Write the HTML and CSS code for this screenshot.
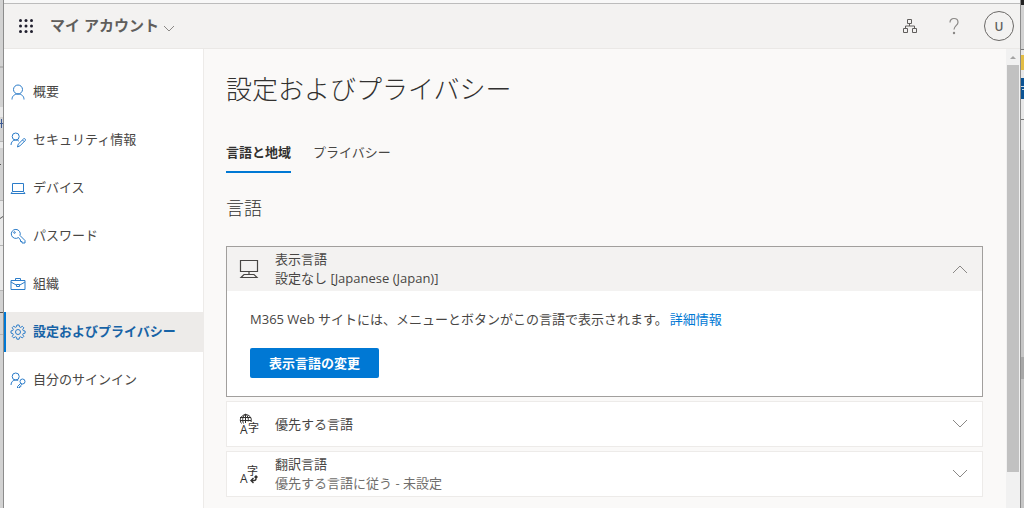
FILE: index.html
```html
<!DOCTYPE html>
<html lang="ja">
<head>
<meta charset="utf-8">
<meta name="viewport" content="width=device-width, initial-scale=1">
<title>マイ アカウント</title>
<link rel="stylesheet" href="styles.css">
</head>
<body>
<div class="desktop">
  <svg class="edge edge-left" viewBox="0 0 4 508" preserveAspectRatio="xMinYMin slice" aria-hidden="true">
    <path fill="#b5b5b5" d="M0 66h3v2H0zM0 141h3v1H0zM0 200h3v1H0zM0 245h3v1H0zM0 290h3v1H0zM0 334h3v1H0z"/>
    <path fill="#e9e9e9" d="M0 107h3v10H0zM0 142h3v6H0zM0 201h3v44H0zM0 246h3v44H0z"/>
    <path fill="#3b5a94" d="M0 123h3v1H0zM1 119h1v9H1z"/>
    <path fill="#555" d="M0 164h1v1H0zM0 218l3-2v1l-3 2zM0 312h3v1H0z"/>
    <path fill="#8c8c8c" d="M3 0h1v508H3z"/>
  </svg>
  <div class="window">
    <header class="topbar">
      <button class="icon-button waffle" type="button" aria-label="アプリ起動ツール">
        <svg width="16" height="16" viewBox="0 0 16 16" fill="#201f2e"><circle cx="2.500" cy="2.500" r="1.500"/><circle cx="8" cy="2.500" r="1.500"/><circle cx="13.500" cy="2.500" r="1.500"/><circle cx="2.500" cy="8" r="1.500"/><circle cx="8" cy="8" r="1.500"/><circle cx="13.500" cy="8" r="1.500"/><circle cx="2.500" cy="13.500" r="1.500"/><circle cx="8" cy="13.500" r="1.500"/><circle cx="13.500" cy="13.500" r="1.500"/></svg>
      </button>
      <button class="app-name" type="button">マイ アカウント
        <svg width="12" height="8" viewBox="0 0 12 8" fill="none" stroke="#8a8886"><path d="M1 1l5 5 5-5"/></svg>
      </button>
      <div class="tools">
        <button class="icon-button" type="button" aria-label="組織の切り替え">
          <svg width="16" height="16" viewBox="0 0 16 16" fill="none" stroke="#605e5c"><path d="M5.500 1.500h4v4h-4zM1.500 10.500h4v4h-4zM10.500 10.500h4v4h-4zM7.500 5.500v2.500M3.500 10.500V8h9v2.500"/></svg>
        </button>
        <button class="icon-button" type="button" aria-label="ヘルプ">
          <svg width="12" height="18" viewBox="0 0 12 18" fill="none" stroke="#8a8886" stroke-width="1.200"><path d="M2 5.500C2 3 3.700 1.500 6 1.500s4 1.400 4 3.700c0 3.200-4 3.800-4 7.300"/><circle cx="6" cy="16" r=".6" fill="#8a8886"/></svg>
        </button>
        <button class="avatar" type="button" aria-label="アカウント">U</button>
      </div>
    </header>
    <div class="body">
      <nav class="sidebar">
        <a class="nav-item" href="#overview"><svg class="nav-icon" viewBox="0 0 16 16"><circle cx="8" cy="5.500" r="4.500"/><path d="M2 15.500c0-3.500 2.500-5.500 6-5.500s6 2 6 5.500"/></svg>概要</a>
        <a class="nav-item" href="#security"><svg class="nav-icon" viewBox="0 0 16 16"><circle cx="5.700" cy="4.500" r="3.500"/><path d="M1 13c0-3 2-5 4.700-5 1.300 0 2.300.4 3.200 1.100M7.500 15l.7-2.800 5.300-5.300c1.200-1 2.600.6 1.700 1.700l-5.300 5.300zM12.500 8l1.700 1.700"/></svg>セキュリティ情報</a>
        <a class="nav-item" href="#devices"><svg class="nav-icon" viewBox="0 0 16 16"><path d="M2.500 3.500h11v8h-11zM2.500 11.500l-1.500 2h14l-1.500-2"/></svg>デバイス</a>
        <a class="nav-item" href="#password"><svg class="nav-icon" viewBox="0 0 16 16"><path d="M8.500 9.500A4.500 4.500 0 1 1 10 7.500l5 5v2.500h-3v-1.500h-1.500V12z"/><circle cx="4.500" cy="4.500" r=".8"/></svg>パスワード</a>
        <a class="nav-item" href="#organization"><svg class="nav-icon" viewBox="0 0 16 16"><path d="M1 4.500h14v9H1zM5.500 4.500v-2h5v2M1 6l6 3.500M15 6L9 9.500M6.500 8.500h3v2h-3z"/></svg>組織</a>
        <a class="nav-item selected" href="#settings" aria-current="page"><svg class="nav-icon" viewBox="0 0 16 16"><circle cx="8" cy="8" r="2.500"/><path d="M6.900 1h2.200l.4 1.900 1.200.5 1.600-1.100 1.500 1.500-1.100 1.600.5 1.200 1.900.4v2.200l-1.900.4-.5 1.200 1.100 1.600-1.500 1.500-1.600-1.100-1.200.5-.4 1.900H6.900l-.4-1.900-1.200-.5-1.600 1.100-1.500-1.500 1.100-1.600-.5-1.200L1 9.100V6.900l1.800-.4.500-1.200-1.100-1.600 1.500-1.500 1.600 1.100 1.200-.5z"/></svg>設定およびプライバシー</a>
        <a class="nav-item" href="#signins"><svg class="nav-icon" viewBox="0 0 16 16"><circle cx="5.700" cy="4.500" r="3.500"/><path d="M1 13c0-3 2-5 4.700-5 1 0 1.800.2 2.500.6"/><circle cx="12.500" cy="9.500" r="2.500"/><path d="M10.700 11.300L7.500 14.500V16h2v-1.300h1.300v-1.200l1-1.300"/></svg>自分のサインイン</a>
      </nav>
      <main class="content">
        <h1 class="title">設定およびプライバシー</h1>
        <div class="tabs" role="tablist">
          <button class="tab active" role="tab" aria-selected="true" type="button">言語と地域</button>
          <button class="tab" role="tab" aria-selected="false" type="button">プライバシー</button>
        </div>
        <h2 class="subtitle">言語</h2>
        <section class="card open">
          <button class="card-head" type="button" aria-expanded="true">
            <svg class="card-icon" viewBox="0 0 20 20" fill="none" stroke="#484644"><path stroke-width="1.200" d="M1.500 1.500h17v11h-17zM10 12.500v3M5 15.500h10l3 3H2z"/></svg>
            <span class="card-text"><span>表示言語</span><span>設定なし [Japanese (Japan)]</span></span>
            <svg class="chevron" viewBox="0 0 16 10"><path d="M1 9l7-7 7 7"/></svg>
          </button>
          <div class="card-body">
            <p class="message">M365 Web サイトには、メニューとボタンがこの言語で表示されます。<a class="link" href="#details">詳細情報</a></p>
            <button class="primary" type="button">表示言語の変更</button>
          </div>
        </section>
        <section class="card">
          <button class="card-head" type="button" aria-expanded="false">
            <svg class="card-icon" viewBox="0 0 20 20" fill="none" stroke="#323130"><path d="M12 8A5.500 5.500 0 1 0 2.500 9.500M1 3.500h11M1 6.500h11M6.500 0v9M6.500 0C3.500 2 3 6 4.500 9.500M6.500 0c2.500 2 3.200 4.500 2.700 7.500"/><text class="glyph" x="1" y="20" font-size="12">A</text><text class="glyph" x="9" y="18" font-size="11">字</text></svg>
            <span class="card-text">優先する言語</span>
            <svg class="chevron" viewBox="0 0 16 10"><path d="M1 1l7 7 7-7"/></svg>
          </button>
        </section>
        <section class="card">
          <button class="card-head" type="button" aria-expanded="false">
            <svg class="card-icon" viewBox="0 0 20 20" fill="none" stroke="#323130"><text class="glyph" x="1" y="19" font-size="12">A</text><text class="glyph" x="8" y="11" font-size="11">字</text><path stroke-width="1.400" d="M17 12v2.500q0 2-2 2h-3M14.500 14L12 16.500l2.500 2.500M15.500 13.500L17 12l1.500 1.500"/></svg>
            <span class="card-text"><span>翻訳言語</span><span class="muted">優先する言語に従う - 未設定</span></span>
            <svg class="chevron" viewBox="0 0 16 10"><path d="M1 1l7 7 7-7"/></svg>
          </button>
        </section>
      </main>
      <div class="scrollbar" aria-hidden="true"><span class="arrow"></span><span class="thumb"></span></div>
    </div>
  </div>
  <svg class="edge edge-right" viewBox="0 0 4 508" preserveAspectRatio="xMinYMin slice" aria-hidden="true">
    <path fill="#222" d="M1 0h3v5H1z"/><path fill="#e8e8e8" d="M1 50h3v100H1z"/>
    <path fill="#e3bd45" d="M1 55h3v15H1z"/><path fill="#0b5394" d="M1 78h3v21H1z"/><path fill="#c9d9e8" d="M1 86h3v1H1zM2 89h2v1H2z"/>
    <path fill="#777" d="M1 49h3v1H1zM1 119h3v1H1z"/><path fill="#c6c6c6" d="M1 150h3v358H1z"/><path fill="#a8a8a8" d="M1 357h3v22H1z"/><path fill="#8c8c8c" d="M0 0h1v508H0z"/>
  </svg>
</div>
</body>
</html>
```

FILE: styles.css
```css
* { box-sizing: border-box; }

body {
  margin: 0;
  font-family: "Open Sans", "Noto Sans CJK JP", sans-serif;
  font-size: 13px;
  font-weight: 400;
  line-height: 19px;
  color: #484644;
}

button { font: inherit; color: inherit; border: 0; padding: 0; background: none; cursor: pointer; }
svg { display: block; flex: none; }
a { color: inherit; text-decoration: none; }

.desktop { display: flex; height: 100vh; overflow: hidden; background: #d2d2d2; }
.edge { width: 4px; height: 100vh; }
.window { flex: 1; min-width: 0; display: flex; flex-direction: column; border-top: 3px solid #f8f8f8; }

.topbar {
  display: flex;
  align-items: center;
  flex: none;
  height: 46px;
  padding: 0 6px 0 14px;
  background: #f3f2f1;
  border-top: 1px solid #bcbcbc;
  border-bottom: 1px solid #eae8e6;
}
.icon-button { display: flex; align-items: center; justify-content: center; }
.app-name {
  display: flex;
  align-items: center;
  gap: 4px;
  margin-left: 16px;
  padding-bottom: 2px;
  font-size: 15px;
  font-weight: 600;
  line-height: 20px;
  color: #605e5c;
}
.app-name svg { margin-top: 8px; }
.tools { display: flex; align-items: center; gap: 30px; margin-left: auto; }
.avatar {
  width: 30px;
  height: 30px;
  margin-left: -6px;
  border: 1px solid #6b6967;
  border-radius: 50%;
  font-size: 12px;
  font-weight: 600;
  color: #605e5c;
}

.body { display: flex; flex: 1; min-height: 0; }

.sidebar {
  display: flex;
  flex-direction: column;
  gap: 8px;
  flex: 0 0 200px;
  padding-top: 23px;
  background: #fff;
  border-right: 1px solid #edebe9;
}
.nav-item {
  display: flex;
  align-items: center;
  gap: 7px;
  height: 40px;
  padding: 0 0 1px 4px;
  border-left: 2px solid transparent;
}
.nav-item.selected { background: #edebe9; border-left-color: #0078d4; color: #1763a6; font-weight: 600; }
.nav-icon { width: 16px; height: 16px; fill: none; stroke: #2b7cc9; }

.content { flex: 1; min-width: 0; padding: 22px 23px 0 22px; background: #faf9f8; overflow: hidden; }
.title { margin: 0; font-size: 26px; font-weight: 300; line-height: 36px; color: #323130; }
.tabs { display: flex; gap: 22px; margin-top: 26px; }
.tab { padding: 10px 0 9px; border-bottom: 2px solid transparent; }
.tab.active { font-weight: 600; color: #323130; border-bottom-color: #0078d4; }
.subtitle { margin: 22px 0 24px; font-size: 18px; font-weight: 300; line-height: 27px; color: #323130; }

.card { margin-bottom: 4px; background: #fff; border: 1px solid #edebe9; }
.card.open { border-color: #a19f9d; }
.card.open .card-head { background: #f3f2f1; }
.card-head { display: flex; align-items: center; width: 100%; height: 44px; padding: 0 14px 0 12px; text-align: left; }
.card-icon { width: 20px; height: 20px; margin-right: 16px; overflow: visible; }
.card-text { display: flex; flex-direction: column; flex: 1; }
.muted { color: #706e6c; }
.glyph { fill: #323130; stroke: none; font-weight: 400; }
.chevron { width: 16px; height: 10px; fill: none; stroke: #8a8886; stroke-width: 1; }
.card-body { padding: 19px 23px 18px; }
.message { margin: 0 0 19px; }
.link { margin-left: 2px; color: #0078d4; }
.primary { height: 30px; padding: 0 19px; border-radius: 2px; background: #0078d4; color: #fff; font-weight: 600; }

.scrollbar { display: flex; flex-direction: column; align-items: center; flex: 0 0 14px; padding-top: 7px; background: #f1f1f1; }
.arrow { border: 3px solid transparent; border-top-width: 0; border-bottom: 3px solid #a3a3a3; }
.thumb { width: 12px; height: 90%; margin-top: 6px; background: #c1c1c1; }
```
